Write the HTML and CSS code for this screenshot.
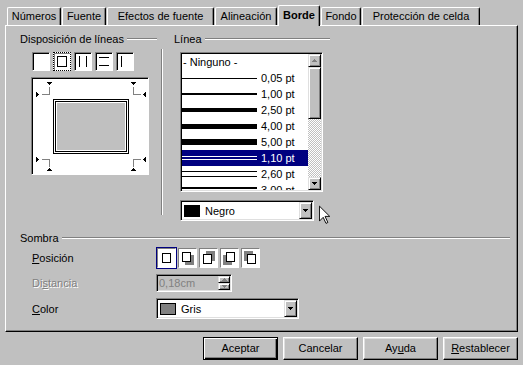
FILE: index.html
```html
<!DOCTYPE html>
<html lang="es">
<head>
    <meta charset="UTF-8">
    <title>Atributos de celda</title>
    <link rel="stylesheet" href="styles.css">
</head>
<body>
<div class="dialog">
    <div class="tabs">
        <div class="tab tab-numeros">Números</div>
        <div class="tab tab-fuente">Fuente</div>
        <div class="tab tab-efectos">Efectos de fuente</div>
        <div class="tab tab-alineacion">Alineación</div>
        <div class="tab tab-borde active">Borde</div>
        <div class="tab tab-fondo">Fondo</div>
        <div class="tab tab-proteccion">Protección de celda</div>
    </div>

    <div class="panel">
        <div class="top-row">
            <section class="group group-layout">
                <div class="group-title"><span>Disposición de líneas</span><i class="rule"></i></div>
                <div class="presets">
                    <div class="preset"></div>
                    <div class="preset focused">
                        <svg width="16" height="17"><rect x="3.5" y="3.5" width="9" height="10" fill="none" stroke="#000"/></svg>
                    </div>
                    <div class="preset">
                        <svg width="16" height="17"><rect x="4" y="3" width="1" height="11"/><rect x="11" y="3" width="1" height="11"/></svg>
                    </div>
                    <div class="preset">
                        <svg width="16" height="17"><rect x="3" y="4" width="10" height="1"/><rect x="3" y="12" width="10" height="1"/></svg>
                    </div>
                    <div class="preset">
                        <svg width="16" height="17"><rect x="4" y="3" width="1" height="11"/></svg>
                    </div>
                </div>
                <div class="preview">
                    <svg width="116" height="96" viewBox="-1 -1 116 96" shape-rendering="crispEdges">
                        <rect x="20.5" y="20.5" width="75" height="54" fill="none" stroke="#000"/>
                        <rect x="22.5" y="22.5" width="71" height="50" fill="none" stroke="#000"/>
                        <rect x="24" y="24" width="68" height="47" fill="#c0c0c0"/>
                        <g fill="#808080">
                            <rect x="16" y="8" width="1" height="8"/><rect x="9" y="15" width="8" height="1"/>
                            <rect x="100" y="8" width="1" height="8"/><rect x="100" y="15" width="8" height="1"/>
                            <rect x="9" y="80" width="8" height="1"/><rect x="16" y="80" width="1" height="8"/>
                            <rect x="100" y="80" width="8" height="1"/><rect x="100" y="80" width="1" height="8"/>
                        </g>
                        <g fill="#000">
                            <path d="M14 3H19V4H18V5H17V6H16V5H15V4H14Z"/>
                            <path d="M3 13H4V14H5V15H6V16H5V17H4V18H3Z"/>
                            <path d="M98 3H103V4H102V5H101V6H100V5H99V4H98Z"/>
                            <path d="M113 13V18H112V17H111V16H110V15H111V14H112V13Z"/>
                            <path d="M3 78H4V79H5V80H6V81H5V82H4V83H3Z"/>
                            <path d="M16 89H17V90H18V91H19V92H14V91H15V90H16Z"/>
                            <path d="M113 78V83H112V82H111V81H110V80H111V79H112V78Z"/>
                            <path d="M100 89H101V90H102V91H103V92H98V91H99V90H100Z"/>
                        </g>
                    </svg>
                </div>
            </section>

            <div class="vsep"></div>

            <section class="group group-line">
                <div class="group-title"><span>Línea</span><i class="rule"></i></div>
                <div class="listbox">
                    <ul class="items">
                        <li class="item none">- Ninguno -</li>
                        <li class="item"><span class="sample s005"></span><span>0,05 pt</span></li>
                        <li class="item"><span class="sample s100"></span><span>1,00 pt</span></li>
                        <li class="item"><span class="sample s250"></span><span>2,50 pt</span></li>
                        <li class="item"><span class="sample s400"></span><span>4,00 pt</span></li>
                        <li class="item"><span class="sample s500"></span><span>5,00 pt</span></li>
                        <li class="item selected"><span class="sample d110"></span><span>1,10 pt</span></li>
                        <li class="item"><span class="sample d260"></span><span>2,60 pt</span></li>
                        <li class="item"><span class="sample d300"></span><span>3,00 pt</span></li>
                    </ul>
                    <div class="vscroll">
                        <div class="sbtn">
                            <svg width="5" height="3" class="arrow-off"><path d="M2 0H3V1H4V2H5V3H0V2H1V1H2Z"/></svg>
                        </div>
                        <div class="thumb"></div>
                        <div class="track"></div>
                        <div class="sbtn">
                            <svg width="5" height="3"><path d="M0 0H5V1H4V2H3V3H2V2H1V1H0Z"/></svg>
                        </div>
                    </div>
                </div>
                <div class="color-row">
                    <div class="combo">
                        <span class="swatch swatch-black"></span>
                        <span class="combo-text">Negro</span>
                        <span class="drop"><svg width="5" height="3"><path d="M0 0H5V1H4V2H3V3H2V2H1V1H0Z"/></svg></span>
                    </div>
                    <svg class="cursor" width="12" height="20" viewBox="0 0 12 20">
                        <path d="M0.5 0.5V16.5L4.5 12.5L7.5 19L9.5 18L6.5 11.5H11.5Z" fill="#fff" stroke="#000"/>
                    </svg>
                </div>
            </section>
        </div>

        <section class="group group-shadow">
            <div class="group-title"><span>Sombra</span><i class="rule"></i></div>
            <div class="shadow-grid">
                <label><u>P</u>osición</label>
                <div class="shadow-pos">
                    <div class="spos selected">
                        <svg width="17" height="18"><rect x="4.5" y="4.5" width="8" height="9" fill="#fff" stroke="#000"/></svg>
                    </div>
                    <div class="spos">
                        <svg width="17" height="18"><rect x="6" y="6" width="9" height="10" fill="#808080"/><rect x="3.5" y="3.5" width="8" height="9" fill="#fff" stroke="#000"/></svg>
                    </div>
                    <div class="spos">
                        <svg width="17" height="18"><rect x="6" y="2" width="9" height="10" fill="#808080"/><rect x="3.5" y="5.5" width="8" height="9" fill="#fff" stroke="#000"/></svg>
                    </div>
                    <div class="spos">
                        <svg width="17" height="18"><rect x="2" y="6" width="9" height="10" fill="#808080"/><rect x="5.5" y="3.5" width="8" height="9" fill="#fff" stroke="#000"/></svg>
                    </div>
                    <div class="spos">
                        <svg width="17" height="18"><rect x="2" y="2" width="9" height="10" fill="#808080"/><rect x="5.5" y="5.5" width="8" height="9" fill="#fff" stroke="#000"/></svg>
                    </div>
                </div>

                <label class="disabled">Di<u>s</u>tancia</label>
                <div class="spin-field">
                    <span class="spin-text">0,18cm</span>
                    <span class="spin">
                        <span class="spin-btn"><svg width="5" height="3" class="arrow-off"><path d="M2 0H3V1H4V2H5V3H0V2H1V1H2Z"/></svg></span>
                        <span class="spin-btn"><svg width="5" height="3" class="arrow-off"><path d="M0 0H5V1H4V2H3V3H2V2H1V1H0Z"/></svg></span>
                    </span>
                </div>

                <label><u>C</u>olor</label>
                <div class="combo combo-gris">
                    <span class="swatch swatch-grey"></span>
                    <span class="combo-text">Gris</span>
                    <span class="drop"><svg width="5" height="3"><path d="M0 0H5V1H4V2H3V3H2V2H1V1H0Z"/></svg></span>
                </div>
            </div>
        </section>
    </div>

    <div class="buttons">
        <div class="btn default">Aceptar</div>
        <div class="btn">Cancelar</div>
        <div class="btn">Ay<u>u</u>da</div>
        <div class="btn"><u>R</u>establecer</div>
    </div>
</div>
</body>
</html>
```

FILE: styles.css
```css
* {
    box-sizing: border-box;
}

body {
    margin: 0;
    background: #c0c0c0;
    font: 11px "Liberation Sans", Arial, sans-serif;
    color: #000;
}

svg {
    display: block;
}

.dialog {
    width: 523px;
    height: 365px;
    overflow: hidden;
}

/* tab strip */
.tabs {
    display: flex;
    align-items: flex-end;
    gap: 1px;
    height: 25px;
    padding: 5px 0 0 7px;
}

.tab {
    height: 18px;
    line-height: 16px;
    text-align: center;
    white-space: nowrap;
    background: #c0c0c0;
    border: 1px solid #fff;
    border-bottom: none;
    border-right-color: #000;
    border-radius: 2px 2px 0 0;
    box-shadow: inset -1px 0 #808080;
}

.tab-numeros { width: 54px; }
.tab-fuente { width: 44px; }
.tab-efectos { width: 107px; }
.tab-alineacion { width: 62px; }
.tab-borde { width: 42px; }
.tab-fondo { width: 40px; }
.tab-proteccion { width: 118px; }

.tab.active {
    position: relative;
    z-index: 1;
    height: 21px;
    margin-bottom: -1px;
    line-height: 18px;
    font-weight: bold;
}

/* page */
.panel {
    margin-left: 5px;
    width: 513px;
    height: 307px;
    padding: 6px 7px 0 14px;
    border: 1px solid;
    border-color: #fff #000 #000 #fff;
    box-shadow: inset -1px -1px #808080;
}

.top-row {
    display: flex;
    align-items: flex-start;
}

.group-title {
    display: flex;
    align-items: center;
    gap: 3px;
    height: 14px;
    line-height: 14px;
    white-space: nowrap;
}

.rule {
    flex: 1;
    height: 2px;
    border-top: 1px solid #808080;
    border-bottom: 1px solid #fff;
}

.group-layout {
    width: 137px;
}

.vsep {
    width: 2px;
    height: 166px;
    margin: 17px 11px 0 4px;
    border-left: 1px solid #808080;
    border-right: 1px solid #fff;
}

.group-line {
    width: 156px;
}

.presets {
    display: flex;
    gap: 3px;
    margin: 6px 0 0 12px;
}

.preset {
    width: 18px;
    height: 19px;
    background: #fff;
    border: 1px solid;
    border-color: #808080 #fff #fff #808080;
    box-shadow: inset 1px 1px #000;
}

.preset.focused {
    border: 1px dotted #000;
    box-shadow: inset 1px 1px #808080;
}

.preview {
    width: 118px;
    height: 98px;
    margin: 6px 0 0 11px;
    background: #fff;
    border: 1px solid;
    border-color: #808080 #fff #fff #808080;
    box-shadow: inset 1px 1px #000;
}

/* line style list */
.listbox {
    display: flex;
    width: 143px;
    height: 140px;
    margin: 6px 0 0 6px;
    padding: 1px;
    background: #fff;
    border: 1px solid;
    border-color: #808080 #fff #fff #808080;
    box-shadow: inset 1px 1px #000, inset -1px -1px #dfdfdf;
}

.items {
    flex: 1;
    margin: 0;
    padding: 0;
    list-style: none;
    overflow: hidden;
}

.item {
    display: flex;
    align-items: center;
    gap: 4px;
    height: 16px;
    white-space: nowrap;
}

.item.none {
    padding-left: 1px;
}

.item.selected {
    background: #000080;
    color: #fff;
}

.sample {
    flex: none;
    width: 75px;
}

.s005 { height: 1px; background: #000; }
.s100 { height: 2px; background: #000; }
.s250 { height: 4px; background: #000; }
.s400 { height: 5px; background: #000; }
.s500 { height: 6px; background: #000; }
.d110 { height: 4px; border-top: 1px solid #fff; border-bottom: 1px solid #fff; }
.d260 { height: 6px; border-top: 1px solid #000; border-bottom: 1px solid #000; }
.d300 { height: 6px; border-top: 2px solid #000; border-bottom: 2px solid #000; }

.vscroll {
    display: flex;
    flex-direction: column;
    width: 13px;
}

.sbtn,
.thumb,
.drop,
.spin-btn,
.btn {
    background: #c0c0c0;
    border: 1px solid;
    border-color: #dfdfdf #000 #000 #dfdfdf;
    box-shadow: inset 1px 1px #fff, inset -1px -1px #808080;
}

.sbtn {
    display: flex;
    align-items: center;
    justify-content: center;
    height: 13px;
}

.thumb {
    height: 52px;
}

.track {
    flex: 1;
    background: repeating-conic-gradient(#fff 0 25%, #c0c0c0 0 50%) 0 0 / 2px 2px;
}

.arrow-off {
    fill: #808080;
}

/* combos */
.color-row {
    display: flex;
    align-items: flex-start;
    gap: 5px;
    margin: 8px 0 0 6px;
}

.combo {
    display: flex;
    align-items: center;
    width: 143px;
    height: 21px;
    padding: 1px;
    background: #fff;
    border: 1px solid;
    border-color: #808080 #fff #fff #808080;
    box-shadow: inset 1px 1px #000, inset -1px -1px #dfdfdf;
}

.swatch {
    width: 16px;
    height: 12px;
    margin-left: 2px;
    border: 1px solid #000;
}

.swatch-black { background: #000; }
.swatch-grey { background: #808080; }

.combo-text {
    margin-left: 5px;
}

.drop {
    display: flex;
    align-items: center;
    justify-content: center;
    width: 13px;
    height: 100%;
    margin-left: auto;
}

.cursor {
    margin: 5px 0 -4px;
}

/* shadow */
.group-shadow {
    margin-top: 10px;
}

.shadow-grid {
    display: grid;
    grid-template-columns: 124px auto;
    grid-template-rows: 20px 18px 21px;
    row-gap: 6px;
    align-items: center;
    margin: 3px 0 0 12px;
}

.shadow-grid label.disabled {
    color: #808080;
    text-shadow: 1px 1px #fff;
}

.shadow-pos {
    display: flex;
    gap: 2px;
    margin-left: 1px;
}

.spos {
    width: 19px;
    height: 20px;
    background: #fff;
    border: 1px solid;
    border-color: #808080 #fff #fff #808080;
}

.spos.selected {
    outline: 1px solid #000080;
}

.spin-field {
    display: flex;
    width: 76px;
    height: 18px;
    padding: 1px;
    border: 1px solid;
    border-color: #808080 #fff #fff #808080;
    box-shadow: inset 1px 1px #000, inset -1px -1px #dfdfdf;
}

.spin-text {
    flex: 1;
    line-height: 14px;
    padding-left: 1px;
    color: #808080;
}

.spin {
    display: flex;
    flex-direction: column;
    width: 12px;
}

.spin-btn {
    display: flex;
    flex: 1;
    align-items: center;
    justify-content: center;
}

/* dialog buttons */
.buttons {
    display: flex;
    justify-content: flex-end;
    gap: 5px;
    padding: 5px 5px 0 0;
}

.btn {
    width: 75px;
    height: 23px;
    line-height: 21px;
    text-align: center;
    border-color: #fff #000 #000 #fff;
    box-shadow: inset -1px -1px #808080, inset 1px 1px #dfdfdf;
}

.btn.default {
    border-color: #000;
    box-shadow: inset 1px 1px #fff, inset -1px -1px #000, inset -2px -2px #808080;
}
```
